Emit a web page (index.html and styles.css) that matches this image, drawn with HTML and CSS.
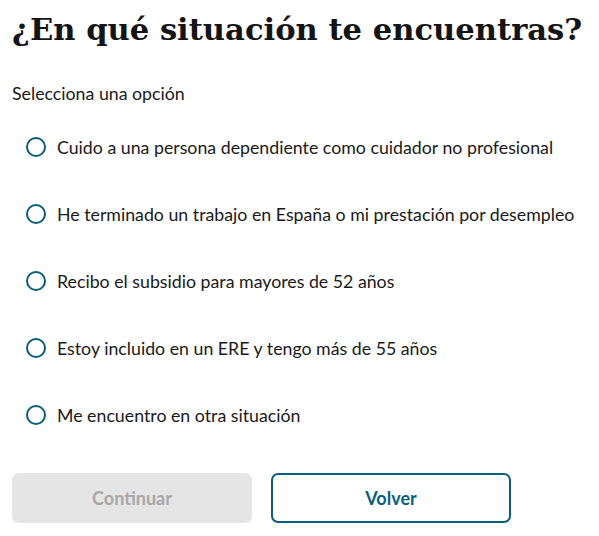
FILE: index.html
```html
<!DOCTYPE html>
<html lang="es">
<head>
<meta charset="utf-8">
<link rel="stylesheet" href="styles.css">
</head>
<body>
<main class="page">
  <h1 class="title">¿En qué situación te encuentras?</h1>
  <div class="group" role="radiogroup">
    <p class="legend">Selecciona una opción</p>
    <div class="options">
      <label class="option"><span class="radio"></span><span class="option-text">Cuido a una persona dependiente como cuidador no profesional</span></label>
      <label class="option"><span class="radio"></span><span class="option-text">He terminado un trabajo en España o mi prestación por desempleo</span></label>
      <label class="option"><span class="radio"></span><span class="option-text">Recibo el subsidio para mayores de 52 años</span></label>
      <label class="option"><span class="radio"></span><span class="option-text">Estoy incluido en un ERE y tengo más de 55 años</span></label>
      <label class="option"><span class="radio"></span><span class="option-text">Me encuentro en otra situación</span></label>
    </div>
  </div>
  <div class="actions">
    <button class="btn btn-disabled" disabled>Continuar</button>
    <button class="btn btn-outline">Volver</button>
  </div>
</main>
</body>
</html>
```

FILE: styles.css
```css
html, body {
  margin: 0;
  padding: 0;
  background: #ffffff;
}
body {
  font-family: Lato, "Noto Sans", sans-serif;
  color: #1a1a1a;
}
.page {
  padding: 0 12px;
}
.title {
  font-family: "DejaVu Serif", "Liberation Serif", serif;
  font-weight: bold;
  font-size: 30.6px;
  line-height: 40px;
  margin: 9px 0 0 0;
  color: #141414;
}
.legend {
  margin: 33px 0 0 0;
  font-size: 17.75px;
  line-height: 22px;
  color: #1a1a1a;
}
.options {
  display: flex;
  flex-direction: column;
  margin-top: 9.5px;
}
.option {
  display: flex;
  align-items: center;
  gap: 11px;
  height: 67px;
  padding-left: 14px;
  font-size: 17.75px;
  color: #1a1a1a;
}
.radio {
  width: 16px;
  height: 16px;
  border: 2px solid #0b5e7a;
  border-radius: 50%;
  flex: none;
}
.actions {
  display: flex;
  gap: 19px;
  margin-top: 24.5px;
}
.btn {
  width: 240px;
  height: 50px;
  border-radius: 7px;
  font-family: Lato, "Noto Sans", sans-serif;
  font-weight: bold;
  font-size: 18px;
  box-sizing: border-box;
}
.btn-disabled {
  background: #e5e5e5;
  border: 0;
  color: #a8a8a8;
}
.btn-outline {
  background: #ffffff;
  border: 2px solid #0b5e7a;
  color: #0b5e7a;
}
```
